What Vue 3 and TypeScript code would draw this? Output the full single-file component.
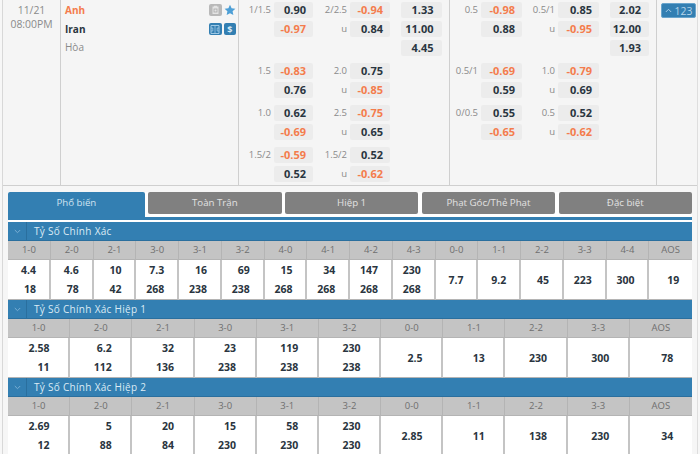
<script setup lang="ts">
interface Row { a?: string; b?: string; c?: string; d?: string; e?: string }
interface Section { title: string; cols: string[]; top: string[]; bottom: string[]; single: string[] }

const marketA: Row[][] = [
  [
    { a: '1/1.5', b: '0.90', c: '2/2.5', d: '-0.94', e: '1.33' },
    { b: '-0.97', c: 'u', d: '0.84', e: '11.00' },
    { e: '4.45' },
  ],
  [
    { a: '1.5', b: '-0.83', c: '2.0', d: '0.75' },
    { b: '0.76', c: 'u', d: '-0.85' },
  ],
  [
    { a: '1.0', b: '0.62', c: '2.5', d: '-0.75' },
    { b: '-0.69', c: 'u', d: '0.65' },
  ],
  [
    { a: '1.5/2', b: '-0.59', c: '1.5/2', d: '0.52' },
    { b: '0.52', c: 'u', d: '-0.62' },
  ],
]
const marketB: Row[][] = [
  [
    { a: '0.5', b: '-0.98', c: '0.5/1', d: '0.85', e: '2.02' },
    { b: '0.88', c: 'u', d: '-0.95', e: '12.00' },
    { e: '1.93' },
  ],
  [
    { a: '0.5/1', b: '-0.69', c: '1.0', d: '-0.79' },
    { b: '0.59', c: 'u', d: '0.69' },
  ],
  [
    { a: '0/0.5', b: '0.55', c: '0.5', d: '0.52' },
    { b: '-0.65', c: 'u', d: '-0.62' },
  ],
]
const markets = [
  { key: 'a', cls: 'market-a', groups: marketA },
  { key: 'b', cls: 'market-b', groups: marketB },
]
const tabs = ['Phổ biến', 'Toàn Trận', 'Hiệp 1', 'Phạt Góc/Thẻ Phạt', 'Đặc biệt']
const sections: Section[] = [
  {
    title: 'Tỷ Số Chính Xác',
    cols: ['1-0', '2-0', '2-1', '3-0', '3-1', '3-2', '4-0', '4-1', '4-2', '4-3', '0-0', '1-1', '2-2', '3-3', '4-4', 'AOS'],
    top: ['4.4', '4.6', '10', '7.3', '16', '69', '15', '34', '147', '230'],
    bottom: ['18', '78', '42', '268', '238', '238', '268', '268', '268', '268'],
    single: ['7.7', '9.2', '45', '223', '300', '19'],
  },
  {
    title: 'Tỷ Số Chính Xác Hiệp 1',
    cols: ['1-0', '2-0', '2-1', '3-0', '3-1', '3-2', '0-0', '1-1', '2-2', '3-3', 'AOS'],
    top: ['2.58', '6.2', '32', '23', '119', '230'],
    bottom: ['11', '112', '136', '238', '238', '238'],
    single: ['2.5', '13', '230', '300', '78'],
  },
  {
    title: 'Tỷ Số Chính Xác Hiệp 2',
    cols: ['1-0', '2-0', '2-1', '3-0', '3-1', '3-2', '0-0', '1-1', '2-2', '3-3', 'AOS'],
    top: ['2.69', '5', '20', '15', '58', '230'],
    bottom: ['12', '88', '84', '230', '230', '230'],
    single: ['2.85', '11', '138', '230', '34'],
  },
]
const isNeg = (v?: string): boolean => !!v && v.startsWith('-')
const gridStyle = (n: number) => ({ gridTemplateColumns: `repeat(${n}, 1fr)` })
</script>

<template>
  <div class="page">
    <div class="match">
      <div class="time">
        <div>11/21</div>
        <div>08:00PM</div>
      </div>
      <div class="teams">
        <div class="team-row">
          <span class="home">Anh</span>
          <span class="icons">
            <span class="ico gray">
              <svg width="9" height="10" viewBox="0 0 9 10"><path d="M1.5 1.5h6v7.5h-6z M3 0.8h3v1.5h-3z" fill="#e4e4e4"/><rect x="3" y="4" width="3" height="3" fill="none" stroke="#aaa" stroke-width=".8"/></svg>
            </span>
            <svg class="star" width="12" height="12" viewBox="0 0 24 24"><path d="M12 1.5l3.2 7 7.6.9-5.6 5.2 1.5 7.5L12 18.3 5.3 22.1l1.5-7.5L1.2 9.4l7.6-.9z" fill="#4d9fd6"/></svg>
          </span>
        </div>
        <div class="team-row">
          <span class="away">Iran</span>
          <span class="icons">
            <span class="ico blue">
              <svg width="10" height="9" viewBox="0 0 10 9"><path d="M1 .5h8v8H1z" fill="none" stroke="#a9d0ea" stroke-width=".9"/><path d="M5 .5v8M1 3h1.8v3H1M9 3H7.2v3H9" fill="none" stroke="#a9d0ea" stroke-width=".7"/></svg>
            </span>
            <span class="ico blue dollar">$</span>
          </span>
        </div>
        <div class="draw">Hòa</div>
      </div>
      <div v-for="m in markets" :key="m.key" class="market" :class="m.cls">
        <div v-for="(g, gi) in m.groups" :key="gi" class="group">
          <div v-for="(r, ri) in g" :key="ri" class="odds-row">
            <span class="label">{{ r.a }}</span>
            <span v-if="r.b" class="cell" :class="{ neg: isNeg(r.b) }">{{ r.b }}</span>
            <span v-else></span>
            <span class="label">{{ r.c }}</span>
            <span v-if="r.d" class="cell" :class="{ neg: isNeg(r.d) }">{{ r.d }}</span>
            <span v-else></span>
            <span v-if="r.e" class="cell wide">{{ r.e }}</span>
          </div>
        </div>
      </div>
      <div class="more">
        <span class="more-btn">
          <svg width="7" height="5" viewBox="0 0 7 5"><path d="M.8 4l2.7-2.7L6.2 4" fill="none" stroke="#a6cbe6" stroke-width="1"/></svg>
          123
        </span>
      </div>
    </div>

    <div class="detail">
      <div class="content">
        <div class="tabs">
          <div v-for="(t, i) in tabs" :key="t" class="tab" :class="{ active: i === 0 }">{{ t }}</div>
        </div>
        <div v-for="s in sections" :key="s.title" class="section">
          <div class="sec-head">
            <span class="sec-toggle">
              <svg width="7" height="5" viewBox="0 0 7 5"><path d="M.8 1l2.7 2.7L6.2 1" fill="none" stroke="#79aed3" stroke-width="1"/></svg>
            </span>
            <span class="sec-title">{{ s.title }}</span>
          </div>
          <div class="score-head" :style="gridStyle(s.cols.length)">
            <span v-for="c in s.cols" :key="c" class="score-col">{{ c }}</span>
          </div>
          <div class="score-body" :style="gridStyle(s.cols.length)">
            <div v-for="(v, i) in s.top" :key="i" class="score-cell">
              <div class="val">{{ v }}</div>
              <div class="val">{{ s.bottom[i] }}</div>
            </div>
            <div v-for="(v, i) in s.single" :key="'x' + i" class="score-cell">
              <div class="val">{{ v }}</div>
            </div>
          </div>
        </div>
      </div>
    </div>
  </div>
</template>

<style>
html, body { margin: 0; background: #f7f7f7; overflow: hidden; }
</style>

<style scoped>
.page {
  width: 696px;
  height: 454px;
  margin-left: 2px;
  overflow: hidden;
  font-family: "Open Sans", "Liberation Sans", sans-serif;
  background: #f6f6f6;
  box-sizing: border-box;
  border-left: 1px solid #d8d8d8;
  border-right: 1px solid #dedede;
}
.match {
  display: flex;
  height: 186px;
  box-sizing: border-box;
  background: #f5f5f5;
  border-bottom: 1px solid #cfcfcf;
}
.time {
  width: 57px;
  flex: none;
  padding-top: 3px;
  border-right: 1px solid #cfcfcf;
  color: #8a8a8a;
  font-size: 10.4px;
  line-height: 14px;
  text-align: center;
}
.teams {
  width: 178px;
  flex: none;
  box-sizing: border-box;
  padding: 2px 2px 0 4px;
  border-right: 1px solid #cfcfcf;
  font-size: 10px;
}
.team-row {
  display: flex;
  justify-content: space-between;
  align-items: center;
  height: 16px;
  margin-bottom: 3px;
}
.home { color: #f47c4c; font-weight: 700; }
.away { color: #2a3540; font-weight: 700; }
.draw { color: #8a8a8a; line-height: 15px; }
.icons {
  display: flex;
  align-items: center;
  gap: 2px;
  width: 27px;
}
.ico {
  width: 12.5px;
  height: 12.5px;
  flex: none;
  border-radius: 2px;
  display: flex;
  align-items: center;
  justify-content: center;
}
.ico.gray { background: #b9b9b9; }
.ico.blue { background: #337fb2; }
.dollar { color: #d6e8f4; font-size: 9px; font-weight: 700; }
.star { flex: none; }
.market {
  flex: none;
  box-sizing: border-box;
  padding-top: 2px;
  display: flex;
  flex-direction: column;
  gap: 7px;
  border-right: 1px solid #cfcfcf;
}
.market-a { width: 211px; }
.market-b { width: 207px; }
.group {
  display: flex;
  flex-direction: column;
  gap: 3px;
}
.odds-row {
  display: grid;
  align-items: stretch;
  height: 16px;
}
.market-a .odds-row { grid-template-columns: 35px 39px 37px 40px 51.5px; }
.market-b .odds-row { grid-template-columns: 31px 41px 36px 41px 50px; }
.label {
  color: #8a8a8a;
  font-size: 9.5px;
  line-height: 16px;
  text-align: right;
  padding-right: 3px;
  white-space: nowrap;
}
.cell {
  background: #ececec;
  border-radius: 2px;
  color: #2a3540;
  font-size: 11px;
  font-weight: 700;
  line-height: 16px;
  text-align: right;
  padding-right: 7px;
}
.cell.neg { color: #f47c4c; }
.cell.wide {
  grid-column: 5;
  margin-left: 10.5px;
  padding-right: 8px;
}
.more {
  flex: 1;
  padding: 3px 0 0 4px;
}
.more-btn {
  display: flex;
  align-items: center;
  justify-content: center;
  gap: 3px;
  width: 35px;
  height: 15px;
  box-sizing: border-box;
  background: #337fb2;
  border: 1px solid #69a4cc;
  border-radius: 2px;
  color: #b5d4ea;
  font-size: 10.4px;
}
.detail {
  padding: 6px 5px 0 5px;
  height: 268px;
}
.content {
  background: #fff;
  height: 100%;
}
.tabs {
  display: flex;
  gap: 3.4px;
  height: 25px;
  border-bottom: 3px solid #337fb2;
  margin-bottom: 2px;
}
.tab {
  flex: 1;
  height: 22px;
  background: #808080;
  color: #e2e2e2;
  border-radius: 2px;
  font-size: 9.7px;
  line-height: 22px;
  text-align: center;
}
.tab.active {
  flex: 0 0 136.7px;
  height: 25px;
  background: #337fb2;
  border-radius: 2px 2px 0 0;
  color: #cfe3f1;
}
.section { display: flex; flex-direction: column; }
.sec-head {
  display: flex;
  align-items: center;
  height: 18px;
  background: #337fb2;
  border-bottom: 1px solid #2a6f9e;
  color: #dcebf5;
  font-size: 10px;
}
.sec-toggle {
  width: 19px;
  height: 100%;
  flex: none;
  display: flex;
  align-items: center;
  justify-content: center;
  border-right: 1px solid #2a6f9e;
  box-sizing: border-box;
}
.sec-title { padding-left: 7px; letter-spacing: .3px; }
.score-head {
  display: grid;
  height: 19px;
  background: #c4c4c4;
}
.score-col {
  color: #6f6f6f;
  font-size: 9.5px;
  line-height: 18px;
  text-align: center;
  border-right: 1px solid #b4b4b4;
  border-bottom: 1px solid #b4b4b4;
}
.score-col:last-child { border-right: none; }
.score-body {
  display: grid;
  height: 40px;
  background: #fff;
}
.score-cell {
  box-sizing: border-box;
  display: flex;
  flex-direction: column;
  justify-content: center;
  padding-right: 30%;
  gap: 2.2px;
  border-right: 2px solid #c4c4c4;
  border-bottom: 1px solid #b4b4b4;
  color: #2a3540;
  font-size: 10.5px;
  font-weight: 700;
  line-height: 16px;
  text-align: right;
}
.score-cell:last-child { border-right: none; }
</style>
